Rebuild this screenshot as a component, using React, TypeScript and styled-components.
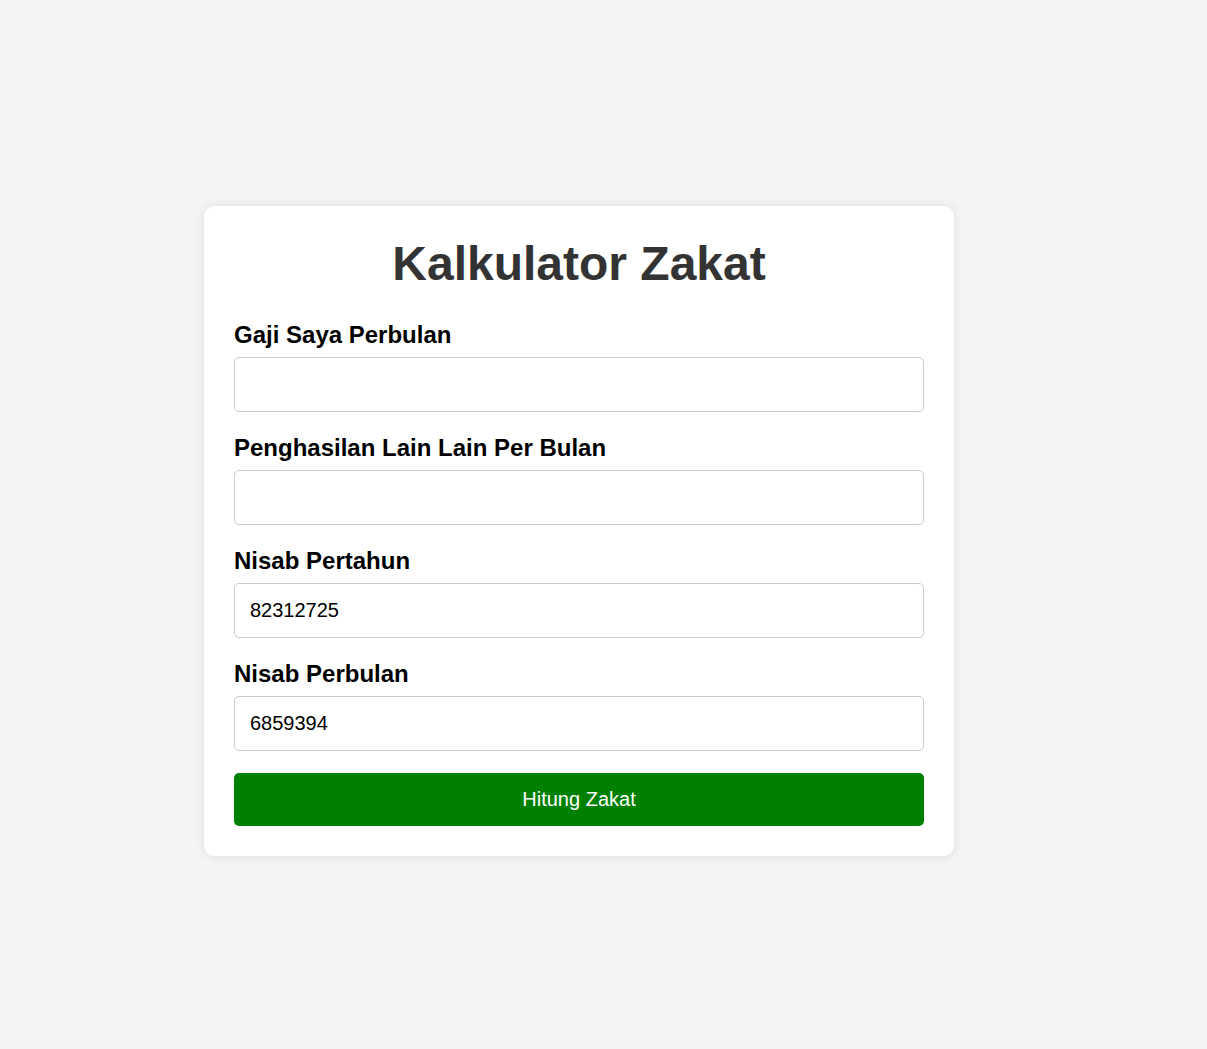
import React, { useState } from 'react'
import styled, { createGlobalStyle } from 'styled-components'

const GlobalStyle = createGlobalStyle`
  * {
    box-sizing: border-box;
  }
  body {
    margin: 0;
    background: #f4f4f4;
    font-family: "Liberation Sans", Arial, sans-serif;
  }
`

const Page = styled.div`
  min-height: 100vh;
  display: flex;
  justify-content: center;
  align-items: center;
  padding: 13px 49px 0 0;
`

const Card = styled.div`
  width: 750px;
  background: #fff;
  border-radius: 10px;
  padding: 30px;
  box-shadow: 0 0 10px rgba(0, 0, 0, 0.1);
`

const Title = styled.h1`
  margin: 0 0 30px;
  font-size: 48px;
  line-height: 55px;
  font-weight: bold;
  color: #333;
  text-align: center;
`

const Group = styled.div`
  margin-bottom: 22px;
`

const Label = styled.label`
  display: block;
  font-size: 24px;
  line-height: 28px;
  font-weight: bold;
  color: #000;
  margin-bottom: 8px;
`

const Input = styled.input`
  display: block;
  width: 100%;
  height: 55px;
  padding: 15px;
  font-family: "Liberation Sans", Arial, sans-serif;
  font-size: 20px;
  color: #000;
  border: 1px solid #ccc;
  border-radius: 5px;
  outline: none;
`

const Button = styled.button`
  display: block;
  width: 100%;
  height: 53px;
  border: none;
  border-radius: 5px;
  background: #008000;
  color: #fff;
  font-family: "Liberation Sans", Arial, sans-serif;
  font-size: 20px;
  cursor: pointer;
`

export default function App() {
  const [gaji, setGaji] = useState('')
  const [lain, setLain] = useState('')
  const nisabTahun = 82312725
  const nisabBulan = Math.round(nisabTahun / 12)

  return (
    <>
      <GlobalStyle />
      <Page>
        <Card>
          <Title>Kalkulator Zakat</Title>
          <Group>
            <Label htmlFor="gaji">Gaji Saya Perbulan</Label>
            <Input id="gaji" type="number" value={gaji} onChange={e => setGaji(e.target.value)} />
          </Group>
          <Group>
            <Label htmlFor="lain">Penghasilan Lain Lain Per Bulan</Label>
            <Input id="lain" type="number" value={lain} onChange={e => setLain(e.target.value)} />
          </Group>
          <Group>
            <Label htmlFor="nisabTahun">Nisab Pertahun</Label>
            <Input id="nisabTahun" type="text" value={nisabTahun} readOnly />
          </Group>
          <Group>
            <Label htmlFor="nisabBulan">Nisab Perbulan</Label>
            <Input id="nisabBulan" type="text" value={nisabBulan} readOnly />
          </Group>
          <Button>Hitung Zakat</Button>
        </Card>
      </Page>
    </>
  )
}
